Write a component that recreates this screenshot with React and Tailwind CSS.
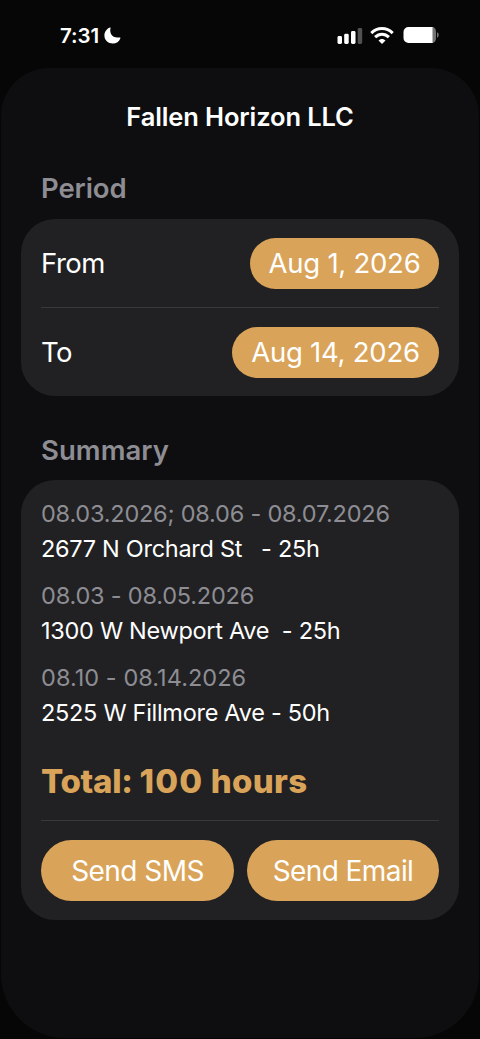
const entries = [
  { dates: '08.03.2026; 08.06 - 08.07.2026', address: '2677 N Orchard St   - 25h', spacing: 'tracking-[-0.22px]' },
  { dates: '08.03 - 08.05.2026', address: '1300 W Newport Ave  - 25h', spacing: 'tracking-[-0.2px]' },
  { dates: '08.10 - 08.14.2026', address: '2525 W Fillmore Ave - 50h', spacing: 'tracking-[0.05px]' },
];

const StatusBar = () => (
  <div className="flex h-[68px] shrink-0 items-start justify-between pt-[23px] pl-[60px] pr-[41px]">
    <div className="flex items-center gap-[5px]">
      <span className="pt-px text-[20.5px] leading-6 font-semibold tracking-[-0.1px]">7:31</span>
      <svg className="h-[17px] w-[17px]" viewBox="0 0 17 17" fill="currentColor">
        <path d="M5.9 0.5C6.4 0.2 6.8 0.6 6.6 1.1C5.1 6 8.2 11.7 15.6 10.4C16.2 10.3 16.6 10.7 16.4 11.2C15.2 14.5 12.4 16.5 8.8 16.5C4.1 16.5 0.4 13 0.4 8.5C0.4 4.9 2.6 1.8 5.9 0.5Z" />
      </svg>
    </div>
    <div className="flex items-center pt-[3px]">
      <svg className="h-[18px] w-[26px]" viewBox="0 0 26 18" fill="currentColor">
        <rect x="0.5" y="10" width="4.5" height="8" rx="1.4" />
        <rect x="7.2" y="7.8" width="4.5" height="10.2" rx="1.4" />
        <rect x="14" y="5" width="4.5" height="13" rx="1.4" />
        <rect x="20.7" y="2" width="4.5" height="16" rx="1.4" opacity="0.3" />
      </svg>
      <svg className="ml-[7px] h-[18px] w-[24px]" viewBox="0 0 24 18" fill="none" stroke="currentColor" strokeWidth="3">
        <path d="M1.3 7.1C7.5 1 16.5 1 22.7 7.1" />
        <path d="M5.1 11.1C9.2 7.2 14.8 7.2 18.9 11.1" />
        <path d="M12 18L8.5 14.6C10.3 12.5 13.7 12.5 15.5 14.6Z" fill="currentColor" stroke="none" />
      </svg>
      <svg className="ml-[9px] h-[18px] w-[36px]" viewBox="0 0 36 18">
        <path d="M5.5 1H30V17H5.5A5 5 0 0 1 .5 12V6A5 5 0 0 1 5.5 1Z" fill="white" />
        <path d="M29.5 1A3.5 5 0 0 1 33 6V12A3.5 5 0 0 1 29.5 17Z" fill="#737373" />
        <path d="M34 6.3C36.3 7.2 36.3 10.8 34 11.7Z" fill="#737373" />
      </svg>
    </div>
  </div>
);

const DateRow = ({ label, value, valueClass }) => (
  <div className="flex h-[88px] items-center justify-between">
    <span className="pt-[2px] text-[27.5px] tracking-[-0.5px]">{label}</span>
    <span className={`flex h-[51px] items-center justify-center rounded-full bg-[#d9a459] pt-[2px] text-[27.5px] whitespace-nowrap tracking-[-0.25px] ${valueClass}`}>
      {value}
    </span>
  </div>
);

const App = () => {
  return (
    <div className="flex h-[1039px] w-[480px] flex-col overflow-hidden bg-[#060606] font-['Inter',sans-serif] text-white">
      <StatusBar />

      <main className="mx-px mb-px flex flex-1 flex-col rounded-t-[48px] rounded-b-[64px] bg-[#0e0e10] px-5">
        <h1 className="mt-[33px] text-center text-[25.5px] leading-8 font-semibold tracking-[-0.12px]">
          Fallen Horizon LLC
        </h1>

        <h2 className="mt-[37px] pl-5 text-[27.5px] leading-9 font-semibold tracking-[-0.1px] text-[#8d8d93]">Period</h2>
        <section className="mt-[13px] h-[177px] rounded-[34px] bg-[#212123] px-5">
          <DateRow label="From" value="Aug 1, 2026" valueClass="w-[189px]" />
          <div className="h-px bg-[#39393b]" />
          <DateRow label="To" value="Aug 14, 2026" valueClass="w-[207px]" />
        </section>

        <h2 className="mt-[36px] pl-5 text-[27.5px] leading-9 font-semibold tracking-[0.05px] text-[#8d8d93]">Summary</h2>
        <section className="mt-[12px] h-[440px] rounded-[34px] bg-[#212123] px-5 pt-4">
          <div className="flex flex-col gap-3">
            {entries.map((entry) => (
              <div key={entry.dates} className="text-[23.5px] leading-[35px] whitespace-pre">
                <p className={`text-[#8d8d93] ${entry.spacing}`}>{entry.dates}</p>
                <p className="tracking-[-0.29px]">{entry.address}</p>
              </div>
            ))}
          </div>

          <p className="mt-[31px] text-[33px] leading-10 font-extrabold tracking-[0.3px] text-[#d9a459]">
            <span className="tracking-[-0.3px]">Total: </span>
            <span className="tracking-[1.2px]">100</span> hours
          </p>
          <div className="mt-[19px] h-px bg-[#39393b]" />

          <div className="mt-[19px] flex gap-[13px]">
            <button className="h-[61px] w-[193px] rounded-full bg-[#d9a459] pt-px text-[28px] tracking-[-0.55px]">Send SMS</button>
            <button className="h-[61px] w-[192px] rounded-full bg-[#d9a459] pt-px text-[28px] tracking-[-0.6px]">Send Email</button>
          </div>
        </section>
      </main>
    </div>
  );
};

export default App;
